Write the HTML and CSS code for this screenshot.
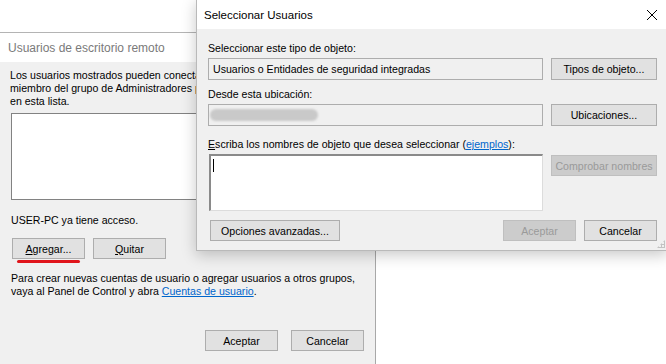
FILE: index.html
```html
<!DOCTYPE html>
<html lang="es">
<head>
  <meta charset="UTF-8" />
  <title>Seleccionar Usuarios</title>
  <link rel="stylesheet" href="styles.css">
</head>
<body>
  <div class="desktop">

    <div class="win win-back">
      <div class="titlebar titlebar-muted">Usuarios de escritorio remoto</div>
      <div class="win-body back-body">
        <p class="intro">Los usuarios mostrados pueden conectarse a este equipo y cualquier<br>miembro del grupo de Administradores puede conectarse aunque no esté<br>en esta lista.</p>
        <div class="listbox"></div>
        <p class="access">USER-PC ya tiene acceso.</p>
        <div class="btn-row">
          <button class="btn"><u>A</u>gregar...</button>
          <button class="btn"><u>Q</u>uitar</button>
          <span class="marker"></span>
        </div>
        <p class="hint">Para crear nuevas cuentas de usuario o agregar usuarios a otros grupos,<br>vaya al Panel de Control y abra <a href="#">Cuentas de usuario</a>.</p>
        <div class="btn-row btn-row-end">
          <button class="btn">Aceptar</button>
          <button class="btn">Cancelar</button>
        </div>
      </div>
    </div>

    <div class="win win-front">
      <div class="titlebar titlebar-main">
        <span>Seleccionar Usuarios</span>
        <svg class="close" width="12" height="12" viewBox="0 0 12 12">
          <path d="M1 1 L11 11 M11 1 L1 11" stroke="#000" stroke-width="1" fill="none" />
        </svg>
      </div>
      <div class="win-body front-body">
        <label class="field-label">Seleccionar este tipo de objeto:</label>
        <div class="field-row row-type">
          <div class="box box-readonly">Usuarios o Entidades de seguridad integradas</div>
          <button class="btn btn-side">Tipos de objeto...</button>
        </div>

        <label class="field-label">Desde esta ubicación:</label>
        <div class="field-row row-place">
          <div class="box box-readonly"><span class="blurred"></span></div>
          <button class="btn btn-side">Ubicaciones...</button>
        </div>

        <label class="field-label"><u>E</u>scriba los nombres de objeto que desea seleccionar (<a href="#">ejemplos</a>):</label>
        <div class="field-row field-row-top">
          <div class="box box-edit"><span class="caret"></span></div>
          <button class="btn btn-side btn-disabled">Comprobar nombres</button>
        </div>

        <div class="footer-row">
          <button class="btn btn-wide">Opciones avanzadas...</button>
          <div class="footer-actions">
            <button class="btn btn-disabled">Aceptar</button>
            <button class="btn">Cancelar</button>
          </div>
        </div>
        <span class="grip"></span>
      </div>
    </div>

  </div>
</body>
</html>
```

FILE: styles.css
```css
* {
  margin: 0;
  padding: 0;
  box-sizing: border-box;
}

body {
  background: #fff;
  font-family: "Liberation Sans", Arial, sans-serif;
  font-size: 10.6px;
  color: #000;
  overflow: hidden;
}

.desktop {
  position: relative;
  width: 666px;
  height: 364px;
  overflow: hidden;
}

a {
  color: #0066cc;
}

.win {
  position: absolute;
  display: flex;
  flex-direction: column;
  background: #f0f0f0;
}

.win-back {
  top: 32px;
  left: 0;
  width: 376px;
  height: 340px;
  border-top: 1px solid #b4b4b4;
  border-right: 1px solid #a8a8a8;
}

.win-front {
  top: -1px;
  left: 196px;
  width: 472px;
  height: 252px;
  border: 1px solid #b9b9b9;
  box-shadow: 0 4px 14px rgba(0, 0, 0, 0.22);
}

.titlebar {
  height: 29px;
  flex: none;
  background: #fff;
  display: flex;
  align-items: center;
  justify-content: space-between;
  padding: 0 7px;
  font-size: 12px;
}

.titlebar-main {
  font-size: 11.5px;
}

.titlebar-muted {
  color: #7a7a7a;
  padding-left: 8px;
  padding-top: 1px;
}

.close {
  margin-right: 2px;
}

.win-body {
  position: relative;
  flex: 1;
  display: flex;
  flex-direction: column;
}

/* back window */

.back-body {
  padding: 7px 0 0 10px;
}

.intro {
  line-height: 13px;
  white-space: nowrap;
}

.listbox {
  width: 352px;
  height: 87px;
  margin: 5px 0 0 1px;
  background: #fff;
  border: 1px solid #828282;
}

.access {
  margin: 14px 0 0 1px;
  line-height: 13px;
}

.btn-row {
  position: relative;
  display: flex;
  gap: 8px;
  margin: 11px 0 0 2px;
}

.btn-row-end {
  justify-content: flex-end;
  gap: 13px;
  margin: 32px 11px 0 0;
}

.marker {
  position: absolute;
  left: 5px;
  top: 22px;
  width: 63px;
  height: 3px;
  border-radius: 2px;
  background: #e0151b;
}

.hint {
  margin: 13px 0 0 1px;
  line-height: 13px;
  white-space: nowrap;
}

/* buttons */

.btn {
  width: 73px;
  height: 21px;
  font-family: inherit;
  font-size: 10.6px;
  color: #000;
  background: #e1e1e1;
  border: 1px solid #adadad;
}

.btn-side {
  width: 106px;
  height: 22px;
  flex: none;
}

.btn-wide {
  width: 130px;
}

.btn-disabled {
  background: #cccccc;
  border-color: #bfbfbf;
  color: #9a9a9a;
}

/* front window */

.front-body {
  padding: 12px 10px 0 11px;
}

.field-label {
  display: block;
  line-height: 14px;
  margin-bottom: 3px;
}

.field-row {
  display: flex;
  gap: 8px;
}

.row-type {
  margin-bottom: 7px;
}

.row-place {
  margin-bottom: 11px;
}

.field-row-top {
  align-items: flex-start;
  margin-bottom: 9px;
}

.box {
  position: relative;
  width: 335px;
  height: 22px;
  flex: none;
  border: 1px solid #adadad;
  display: flex;
  align-items: center;
  padding-left: 4px;
}

.box-readonly {
  background: #f0f0f0;
}

.blurred {
  width: 108px;
  height: 12px;
  margin-left: -3px;
  border-radius: 6px;
  background: #c9c9c9;
  filter: blur(1px);
}

.box-edit {
  height: 57px;
  width: 334px;
  margin-left: 1px;
  background: #fff;
  align-items: flex-start;
  padding: 3px 0 0 2px;
  border-color: #dcdcdc;
  border-top: 2px solid #8a8a8a;
  border-left: 2px solid #8a8a8a;
}

.field-row-top .btn-side {
  height: 21px;
  margin-top: 1px;
}

.caret {
  width: 1px;
  height: 13px;
  background: #000;
}

.footer-row {
  display: flex;
  justify-content: space-between;
  margin-left: 2px;
}

.footer-actions {
  display: flex;
  gap: 8px;
}

.grip {
  position: absolute;
  right: 2px;
  bottom: 2px;
  width: 8px;
  height: 8px;
  background:
    radial-gradient(circle, #c2c2c2 1px, transparent 1.2px) 0 0 / 3px 3px;
  clip-path: polygon(100% 0, 100% 100%, 0 100%);
}
```
